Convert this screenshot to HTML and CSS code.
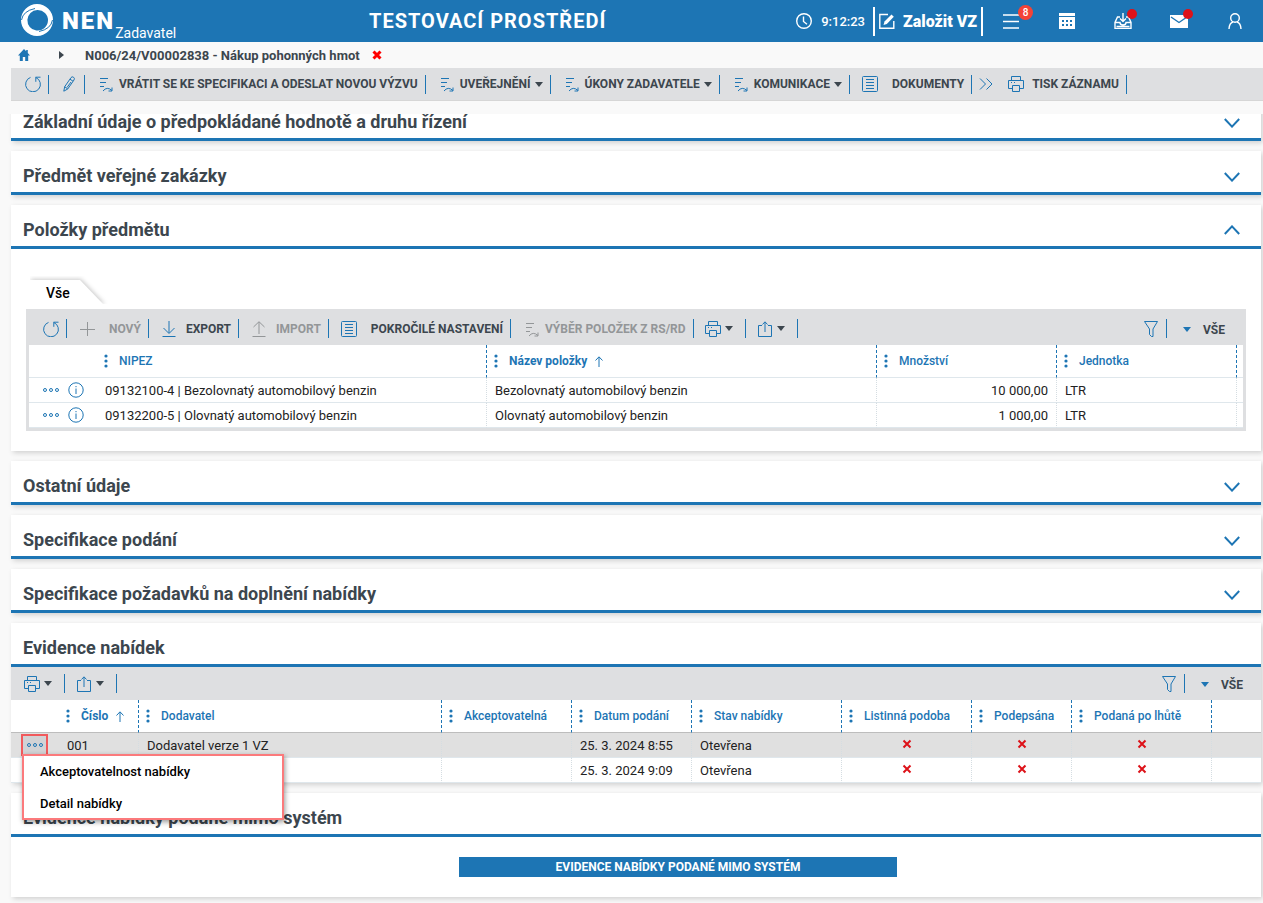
FILE: index.html
```html
<!DOCTYPE html>
<html lang="cs">
<head>
    <meta charset="UTF-8">
    <title>NEN - Nákup pohonných hmot</title>
    <link rel="stylesheet" href="styles.css">
</head>
<body>
    <!-- Icon set -->
    <svg class="sprite" aria-hidden="true">
        <symbol id="i-refresh" viewBox="0 0 16 16"><path d="M10.5 1.2h5M10.8 1.2v4.6M11 1.6a7.4 7.4 0 1 1-5.5-.2"/></symbol>
        <symbol id="i-pencil" viewBox="0 0 12 16"><path d="M.8 15.200l.9-4.500L8 1.600Q9 .2 10.500 1.200T11 4L4.700 13zM7 3.200l3 2M8 6l-4 5.500M1.700 10.700l3 2.300"/></symbol>
        <symbol id="i-flow" viewBox="0 -2 14 16"><path d="M1 .5h8M1 4.500h6M1 8.500h4M4 13q4-5 9-.5M13 9.500v3.500h-3.500"/></symbol>
        <symbol id="i-list" viewBox="0 0 16 16"><rect x=".5" y=".5" width="15" height="15" rx="1"/><path d="M4 3.500h8M4 6.500h8M4 9.500h8M4 12.500h8"/></symbol>
        <symbol id="i-more" viewBox="0 0 14 12"><path d="M1 .5L6.500 6 1 11.500M7.500 .5L13 6l-5.500 5.500"/></symbol>
        <symbol id="i-print" viewBox="0 0 16 16"><path d="M3.500 4V.5h9V4M4.500 12.500h-4v-8h15v8h-4M4.500 9.500h7v6h-7zM3 6.500h1M6 6.500h1"/></symbol>
        <symbol id="i-share" viewBox="0 0 14 16"><path d="M4 4.500H.5v11h13v-11H10M7 11V1M4.500 3.500L7 .8l2.500 2.700"/></symbol>
        <symbol id="i-plus" viewBox="0 0 16 16"><path d="M8.500 1v14M1 8.500h15"/></symbol>
        <symbol id="i-down" viewBox="0 0 14 16"><path d="M7 0v12M1.500 7L7 12.500 12.500 7M.5 15.500h13"/></symbol>
        <symbol id="i-up" viewBox="0 0 14 16"><path d="M7 13V1M1.500 6L7 .7 12.500 6M.5 15.500h13"/></symbol>
        <symbol id="i-filter" viewBox="0 0 14 16"><path d="M.5 .5h13L9 8v7.500H7.500L5.500 13.500V8z"/></symbol>
        <symbol id="i-chevron" viewBox="0 0 16 10"><path d="M.8 1L8 8.600 15.200 1"/></symbol>
        <symbol id="i-sort" viewBox="0 0 8 11"><path d="M4 11V1M.5 4.500L4 .8l3.500 3.700"/></symbol>
        <symbol id="i-kebab" viewBox="0 0 4 14"><circle cx="2" cy="2" r="1.600"/><circle cx="2" cy="7" r="1.600"/><circle cx="2" cy="12" r="1.600"/></symbol>
        <symbol id="i-dots" viewBox="0 0 18 6"><circle cx="3" cy="3" r="1.500"/><circle cx="9" cy="3" r="1.500"/><circle cx="15" cy="3" r="1.500"/></symbol>
        <symbol id="i-info" viewBox="0 0 16 16"><circle cx="8" cy="8" r="7.200"/><path d="M8 6.500V12M8 4v1.200"/></symbol>
        <symbol id="i-cross" viewBox="0 0 10 10"><path d="M1.500 1.500l7 7M8.500 1.500l-7 7"/></symbol>
    </svg>

    <header class="topbar">
        <a class="brand" href="#">
            <svg class="brand-logo" viewBox="0 0 32 32">
                <path class="ring" fill-rule="evenodd" d="M16 0a16 16 0 1 0 0 32a16 16 0 0 0 0-32zM16.300 6a10.300 10.300 0 1 1-1 20.500a10.300 10.300 0 0 1 1-20.500z"/>
                <path class="swirl" d="M.5 16Q2 7 14 4.500M31.500 16Q30 25 18 27.500"/>
            </svg>
            <span class="brand-name">NEN</span>
            <span class="brand-role">Zadavatel</span>
        </a>
        <div class="env">TESTOVACÍ PROSTŘEDÍ</div>
        <div class="clock">
            <svg class="icon-16" viewBox="0 0 16 16"><circle cx="8" cy="8" r="7.300"/><path d="M7.500 3.500v5l3.500 2.800"/></svg>
            <span>9:12:23</span>
        </div>
        <button class="new-vz">
            <svg class="icon-16" viewBox="0 0 16 16"><path d="M9 1.500H.8v13.700h14V8"/><path class="solid" d="M4.500 12l1-3.500L12.500 1.500l2.300 2.300L7.800 11z"/></svg>
            Založit VZ
        </button>
        <nav class="quick">
            <button aria-label="Menu"><svg class="icon-18" viewBox="0 0 18 16"><path d="M1 2h16M1 8.500h16M1 15h16"/></svg><span class="badge">8</span></button>
            <button aria-label="Kalendář"><svg class="icon-18" viewBox="0 0 18 16"><path class="solid" fill-rule="evenodd" d="M1 0h16v3H1zM1 4h16v12H1zM4 7v2h2V7zM8 7v2h2V7zM12 7v2h2V7zM4 11v2h2v-2zM8 11v2h2v-2zM12 11v2h2v-2z"/></svg></button>
            <button aria-label="Doručené"><svg class="icon-18" viewBox="0 0 18 16"><path d="M6 4H3.500L1 9.500v6h16v-6L14.500 4H12M1 9.500h5q0 2.500 3 2.500t3-2.500h5M9 0v8M6 5.500l3 3 3-3M2.500 13.500h13"/></svg><span class="dot"></span></button>
            <button aria-label="Zprávy"><svg class="icon-18" viewBox="0 0 18 16"><path class="solid" d="M0 2h18v13H0z"/><path class="fold" d="M1 4l8 5.500L17 4"/></svg><span class="dot"></span></button>
            <button aria-label="Uživatel"><svg class="icon-18" viewBox="0 0 18 16"><circle cx="9" cy="5" r="4.300"/><path d="M3 16q.3-6 4-7M15 16q-.3-6-4-7"/></svg></button>
        </nav>
    </header>

    <nav class="crumbs">
        <a href="#" aria-label="Domů"><svg class="home" viewBox="0 0 12 12"><path d="M6 0L0 6.500h1.800V12h3V8h2.400v4h3V6.500H12L9.800 4V1H8.200v1.200z"/></svg></a>
        <span class="crumb-arrow"></span>
        <span>N006/24/V00002838 - Nákup pohonných hmot</span>
        <button aria-label="Zavřít"><svg class="close"><use href="#i-cross"/></svg></button>
    </nav>

    <div class="toolbar page-toolbar">
        <button class="tool refresh" aria-label="Obnovit"><svg class="icon-16"><use href="#i-refresh"/></svg></button>
        <button class="tool edit" aria-label="Upravit"><svg class="icon-12"><use href="#i-pencil"/></svg></button>
        <button class="tool"><svg class="icon-14"><use href="#i-flow"/></svg>VRÁTIT SE KE SPECIFIKACI A ODESLAT NOVOU VÝZVU</button>
        <button class="tool"><svg class="icon-14"><use href="#i-flow"/></svg>UVEŘEJNĚNÍ<span class="caret"></span></button>
        <button class="tool"><svg class="icon-14"><use href="#i-flow"/></svg>ÚKONY ZADAVATELE<span class="caret"></span></button>
        <button class="tool"><svg class="icon-14"><use href="#i-flow"/></svg>KOMUNIKACE<span class="caret"></span></button>
        <button class="tool wide"><svg class="icon-16"><use href="#i-list"/></svg>DOKUMENTY</button>
        <button class="tool more" aria-label="Další"><svg class="icon-14"><use href="#i-more"/></svg></button>
        <button class="tool print"><svg class="icon-16"><use href="#i-print"/></svg>TISK ZÁZNAMU</button>
    </div>

    <main class="content">
        <section class="panel panel-first">
            <h2 class="panel-head">Základní údaje o předpokládané hodnotě a druhu řízení <svg class="chevron"><use href="#i-chevron"/></svg></h2>
        </section>
        <section class="panel">
            <h2 class="panel-head">Předmět veřejné zakázky <svg class="chevron"><use href="#i-chevron"/></svg></h2>
        </section>
        <section class="panel">
            <h2 class="panel-head">Položky předmětu <svg class="chevron open"><use href="#i-chevron"/></svg></h2>
            <div class="items">
                <div class="tab">
                    <svg class="tab-shape" viewBox="0 0 80 28"><path class="tab-face" d="M0 4h50l24 25H0z"/></svg>
                    <span>Vše</span>
                </div>
                <div class="grid-box">
                    <div class="toolbar">
                        <button class="tool refresh" aria-label="Obnovit"><svg class="icon-16"><use href="#i-refresh"/></svg></button>
                        <button class="tool wide" disabled><svg class="icon-16"><use href="#i-plus"/></svg>NOVÝ</button>
                        <button class="tool transfer"><svg class="icon-14"><use href="#i-down"/></svg>EXPORT</button>
                        <button class="tool transfer" disabled><svg class="icon-14"><use href="#i-up"/></svg>IMPORT</button>
                        <button class="tool wide"><svg class="icon-16"><use href="#i-list"/></svg>POKROČILÉ NASTAVENÍ</button>
                        <button class="tool" disabled><svg class="icon-14"><use href="#i-flow"/></svg>VÝBĚR POLOŽEK Z RS/RD</button>
                        <button class="tool drop" aria-label="Tisk"><svg class="icon-16"><use href="#i-print"/></svg><span class="caret"></span></button>
                        <button class="tool drop" aria-label="Sdílet"><svg class="icon-16"><use href="#i-share"/></svg><span class="caret"></span></button>
                        <button class="tool filter" aria-label="Filtr"><svg class="icon-16"><use href="#i-filter"/></svg></button>
                        <button class="view"><span class="caret"></span>VŠE</button>
                    </div>
                    <table class="grid">
                        <colgroup><col class="w68"><col class="w390"><col class="w390"><col class="w180"><col class="w180"><col></colgroup>
                        <thead>
                            <tr>
                                <th class="plain"></th>
                                <th><svg class="kebab"><use href="#i-kebab"/></svg>NIPEZ</th>
                                <th class="sorted"><svg class="kebab"><use href="#i-kebab"/></svg>Název položky<svg class="sort"><use href="#i-sort"/></svg></th>
                                <th><svg class="kebab"><use href="#i-kebab"/></svg>Množství</th>
                                <th><svg class="kebab"><use href="#i-kebab"/></svg>Jednotka</th>
                                <th class="plain"></th>
                            </tr>
                        </thead>
                        <tbody>
                            <tr>
                                <td class="plain actions"><button aria-label="Akce"><svg class="dots"><use href="#i-dots"/></svg></button><button aria-label="Info"><svg class="icon-16"><use href="#i-info"/></svg></button></td>
                                <td>09132100-4 | Bezolovnatý automobilový benzin</td>
                                <td>Bezolovnatý automobilový benzin</td>
                                <td class="num">10 000,00</td>
                                <td>LTR</td>
                                <td class="plain"></td>
                            </tr>
                            <tr>
                                <td class="plain actions"><button aria-label="Akce"><svg class="dots"><use href="#i-dots"/></svg></button><button aria-label="Info"><svg class="icon-16"><use href="#i-info"/></svg></button></td>
                                <td>09132200-5 | Olovnatý automobilový benzin</td>
                                <td>Olovnatý automobilový benzin</td>
                                <td class="num">1 000,00</td>
                                <td>LTR</td>
                                <td class="plain"></td>
                            </tr>
                        </tbody>
                    </table>
                </div>
            </div>
        </section>
        <section class="panel">
            <h2 class="panel-head">Ostatní údaje <svg class="chevron"><use href="#i-chevron"/></svg></h2>
        </section>
        <section class="panel">
            <h2 class="panel-head">Specifikace podání <svg class="chevron"><use href="#i-chevron"/></svg></h2>
        </section>
        <section class="panel">
            <h2 class="panel-head">Specifikace požadavků na doplnění nabídky <svg class="chevron"><use href="#i-chevron"/></svg></h2>
        </section>
        <section class="panel">
            <h2 class="panel-head">Evidence nabídek</h2>
            <div class="toolbar offers-toolbar">
                <button class="tool drop" aria-label="Tisk"><svg class="icon-16"><use href="#i-print"/></svg><span class="caret"></span></button>
                <button class="tool drop" aria-label="Sdílet"><svg class="icon-16"><use href="#i-share"/></svg><span class="caret"></span></button>
                <button class="tool filter" aria-label="Filtr"><svg class="icon-16"><use href="#i-filter"/></svg></button>
                <button class="view"><span class="caret"></span>VŠE</button>
            </div>
            <table class="grid offers">
                <colgroup><col class="w48"><col class="w80"><col class="w303"><col class="w130"><col class="w120"><col class="w150"><col class="w130"><col class="w100"><col class="w140"><col></colgroup>
                <thead>
                    <tr>
                        <th class="plain"></th>
                        <th class="sorted"><svg class="kebab"><use href="#i-kebab"/></svg>Číslo<svg class="sort"><use href="#i-sort"/></svg></th>
                        <th><svg class="kebab"><use href="#i-kebab"/></svg>Dodavatel</th>
                        <th><svg class="kebab"><use href="#i-kebab"/></svg>Akceptovatelná</th>
                        <th><svg class="kebab"><use href="#i-kebab"/></svg>Datum podání</th>
                        <th><svg class="kebab"><use href="#i-kebab"/></svg>Stav nabídky</th>
                        <th><svg class="kebab"><use href="#i-kebab"/></svg>Listinná podoba</th>
                        <th><svg class="kebab"><use href="#i-kebab"/></svg>Podepsána</th>
                        <th><svg class="kebab"><use href="#i-kebab"/></svg>Podaná po lhůtě</th>
                        <th class="plain"></th>
                    </tr>
                </thead>
                <tbody>
                    <tr class="selected">
                        <td class="plain row-menu">
                            <button class="menu-open" aria-label="Akce"><svg class="dots"><use href="#i-dots"/></svg></button>
                            <div class="menu">
                                <button>Akceptovatelnost nabídky</button>
                                <button>Detail nabídky</button>
                            </div>
                        </td>
                        <td>001</td>
                        <td>Dodavatel verze 1 VZ</td>
                        <td></td>
                        <td>25. 3. 2024 8:55</td>
                        <td>Otevřena</td>
                        <td class="flag"><svg class="no"><use href="#i-cross"/></svg></td>
                        <td class="flag"><svg class="no"><use href="#i-cross"/></svg></td>
                        <td class="flag"><svg class="no"><use href="#i-cross"/></svg></td>
                        <td class="plain"></td>
                    </tr>
                    <tr>
                        <td class="plain"></td>
                        <td></td>
                        <td></td>
                        <td></td>
                        <td>25. 3. 2024 9:09</td>
                        <td>Otevřena</td>
                        <td class="flag"><svg class="no"><use href="#i-cross"/></svg></td>
                        <td class="flag"><svg class="no"><use href="#i-cross"/></svg></td>
                        <td class="flag"><svg class="no"><use href="#i-cross"/></svg></td>
                        <td class="plain"></td>
                    </tr>
                </tbody>
            </table>
        </section>
        <section class="panel">
            <h2 class="panel-head">Evidence nabídky podané mimo systém</h2>
            <div class="panel-action"><button class="primary">EVIDENCE NABÍDKY PODANÉ MIMO SYSTÉM</button></div>
        </section>
    </main>
</body>
</html>
```
FILE: styles.css
```css
* {
    box-sizing: border-box;
}
body {
    margin: 0;
    background: #f9f9f9;
    color: #222;
    font-family: Roboto, Arial, sans-serif;
    font-size: 13px;
}
button {
    padding: 0;
    border: none;
    background: none;
    color: inherit;
    font: inherit;
    cursor: pointer;
}
svg {
    display: block;
    flex: none;
    fill: none;
    stroke: #1d75b4;
    stroke-width: 1;
}
.sprite {
    position: absolute;
    width: 0;
    height: 0;
}
.icon-12 { width: 12px; height: 16px; }
.icon-14 { width: 14px; height: 16px; }
.icon-16 { width: 16px; height: 16px; }
.icon-18 { width: 18px; height: 16px; }

/* Top bar */
.topbar {
    display: flex;
    align-items: center;
    height: 42px;
    padding: 0 19px 0 21px;
    background: #1d75b4;
    color: white;
}
.topbar svg {
    stroke: white;
    stroke-width: 1.4;
}
.topbar .solid {
    fill: white;
    stroke: none;
}
.topbar .fold {
    stroke: #1d75b4;
}
.brand {
    display: flex;
    align-items: flex-end;
    width: 348px;
    height: 42px;
    color: white;
    text-decoration: none;
}
.brand-logo {
    width: 32px;
    height: 32px;
    margin-bottom: 6px;
}
.brand-logo .ring {
    fill: white;
    stroke: none;
}
.brand-logo .swirl {
    stroke: #1d75b4;
    stroke-width: 1;
}
.brand-name {
    margin: 0 0 7px 9px;
    font-size: 24px;
    font-weight: 900;
    line-height: 28px;
    letter-spacing: 2px;
}
.brand-role {
    font-size: 14px;
    line-height: 18px;
}
.env {
    font-size: 20px;
    font-weight: 700;
    letter-spacing: 1px;
}
.clock {
    display: flex;
    flex: 1;
    align-items: center;
    justify-content: flex-end;
    gap: 9px;
    margin-right: 8px;
    font-weight: 500;
}
.new-vz {
    display: flex;
    align-items: center;
    gap: 8px;
    height: 29px;
    padding: 0 4px;
    border: solid white;
    border-width: 0 2px;
    font-size: 16px;
    font-weight: 900;
}
.quick {
    display: flex;
    gap: 38px;
    margin-left: 19px;
}
.quick button {
    position: relative;
}
.badge {
    position: absolute;
    top: -8px;
    right: -13px;
    width: 15px;
    height: 15px;
    border-radius: 50%;
    background: #f44336;
    font-size: 10px;
    font-weight: 500;
    line-height: 15px;
    text-align: center;
}
.dot {
    position: absolute;
    top: -4px;
    right: -5px;
    width: 10px;
    height: 10px;
    border-radius: 50%;
    background: #dd1219;
}

/* Breadcrumbs */
.crumbs {
    display: flex;
    align-items: center;
    height: 26px;
    padding-left: 18px;
    color: #3c464e;
    font-weight: 700;
}
.home {
    width: 12px;
    height: 12px;
    fill: #1d75b4;
    stroke: none;
}
.crumb-arrow {
    margin: 0 21px 0 29px;
    border: 4px solid transparent;
    border-right: none;
    border-left: 5px solid #3c464e;
}
.close {
    width: 10px;
    height: 10px;
    margin-left: 12px;
    stroke: red;
    stroke-width: 3;
}

/* Toolbars */
.toolbar {
    display: flex;
    align-items: center;
    background: #dedfe1;
    color: #3c464e;
    font-size: 12px;
    font-weight: 700;
}
.page-toolbar {
    height: 33px;
    margin-left: 11px;
    border-bottom: 1px solid #d6d6d6;
}
.tool {
    display: flex;
    align-items: center;
    gap: 6px;
    height: 19px;
    padding: 0 7px 0 14px;
    border-right: 1px solid #1d75b4;
    white-space: nowrap;
}
.tool:disabled {
    color: #939698;
}
.tool:disabled svg {
    stroke: #939698;
}
.edit { padding-right: 9px; }
.wide { padding-left: 12px; gap: 14px; }
.transfer { padding-left: 13px; gap: 10px; }
.drop { padding: 0 12px 0 11px; gap: 4px; }
.more { padding: 0 1px 0 7px; border-right: none; }
.print { gap: 8px; }
.filter { margin-left: auto; }
.caret {
    border: 4px solid transparent;
    border-top: 5px solid #3c464e;
    border-bottom: none;
}
.tool:not(.drop) .caret {
    margin-left: -2px;
}
.view {
    display: flex;
    align-items: center;
    gap: 12px;
    padding: 2px 18px 0 16px;
}
.view .caret {
    border-top-color: #1d75b4;
}

/* Panels */
.content {
    overflow: hidden;
    margin-top: 13px;
    padding: 0 2px 6px 11px;
}
.panel {
    margin-bottom: 10px;
    background: white;
    box-shadow: 2px 2px 5px rgba(0,0,0,0.16);
}
.panel-first {
    margin-top: -17px;
}
.panel:last-child {
    margin-bottom: 0;
}
.panel-head {
    display: flex;
    align-items: center;
    justify-content: space-between;
    height: 44px;
    margin: 0;
    padding: 8px 21px 0 12px;
    border-bottom: 3px solid #1d75b4;
    color: #3c464e;
    font-size: 18px;
    font-weight: 700;
}
.chevron {
    width: 16px;
    height: 10px;
    margin-top: 2px;
    stroke-width: 2;
}
.chevron.open {
    margin-top: 0;
    transform: scaleY(-1);
}
.items {
    padding: 27px 15px 20px;
}
.tab {
    position: relative;
    width: 80px;
    height: 28px;
    margin: 0 0 5px 4px;
    padding: 9px 0 0 16px;
    color: black;
    font-size: 14px;
    font-weight: 500;
}
.tab span {
    position: relative;
}
.tab-shape {
    position: absolute;
    top: 0;
    left: 0;
    width: 80px;
    height: 28px;
}
.tab-face {
    fill: white;
    stroke: none;
    filter: drop-shadow(1px -1px 2px rgba(0,0,0,0.2));
}
.grid-box {
    border: 3px solid #dedfe1;
    border-top: none;
}
.grid-box .toolbar {
    height: 36px;
    padding-top: 3px;
}
.offers-toolbar {
    height: 33px;
}
.offers-toolbar .drop:first-child {
    padding-left: 13px;
}

/* Grids */
.grid {
    width: 100%;
    border-collapse: separate;
    border-spacing: 0;
    table-layout: fixed;
    background: white;
}
.w48 { width: 48px; }
.w68 { width: 68px; }
.w80 { width: 80px; }
.w100 { width: 100px; }
.w120 { width: 120px; }
.w130 { width: 130px; }
.w140 { width: 140px; }
.w150 { width: 150px; }
.w180 { width: 180px; }
.w303 { width: 303px; }
.w390 { width: 390px; }
.grid th {
    height: 33px;
    padding: 0 7px;
    border-right: 1px dashed #1d75b4;
    border-bottom: 1px solid #dfe7ec;
    color: #1d75b4;
    font-size: 12px;
    font-weight: 500;
    text-align: left;
    white-space: nowrap;
}
.grid td {
    height: 25px;
    padding: 0 8px;
    border-right: 1px dotted #d5dde2;
    border-bottom: 1px solid #dfe7ec;
    white-space: nowrap;
}
.grid .plain {
    padding: 0;
    border-right: none;
}
.grid .sorted {
    font-weight: 700;
}
.grid .num {
    text-align: right;
}
.offers th {
    border-bottom-color: #bdbdbd;
}
.selected {
    background: #e0e0e0;
}
.kebab {
    display: inline-block;
    width: 4px;
    height: 14px;
    margin-right: 11px;
    fill: #1d75b4;
    stroke: none;
    vertical-align: middle;
}
.sort {
    display: inline-block;
    width: 8px;
    height: 11px;
    margin-left: 8px;
    vertical-align: middle;
}
.dots {
    width: 18px;
    height: 6px;
}
.actions button {
    margin-left: 8px;
    vertical-align: middle;
}
.actions button:first-child {
    margin-left: 13px;
}
.flag svg {
    width: 10px;
    height: 10px;
    margin: 0 auto 2px;
    stroke: #dd1219;
    stroke-width: 2;
}

/* Row menu */
.row-menu {
    position: relative;
}
.menu-open {
    display: flex;
    align-items: center;
    justify-content: center;
    width: 27px;
    height: 22px;
    margin-left: 10px;
    border: 2px solid #f15a5c;
    background: #d2d3d5;
}
.menu {
    position: absolute;
    top: 21px;
    left: 11px;
    z-index: 10;
    width: 262px;
    border: 1px solid #fb7a7c;
    background: white;
    box-shadow: inset 0 0 0 1px #fb7a7c, 1px 2px 5px rgba(0,0,0,0.4);
}
.menu button {
    display: block;
    width: 100%;
    height: 32px;
    padding-left: 17px;
    color: black;
    font-weight: 500;
    text-align: left;
}
.panel-action {
    padding: 20px 0 20px 84px;
}
.primary {
    display: block;
    width: 438px;
    height: 20px;
    margin: 0 auto;
    background: #1d75b4;
    color: white;
    font-size: 12px;
    font-weight: 700;
}
```
